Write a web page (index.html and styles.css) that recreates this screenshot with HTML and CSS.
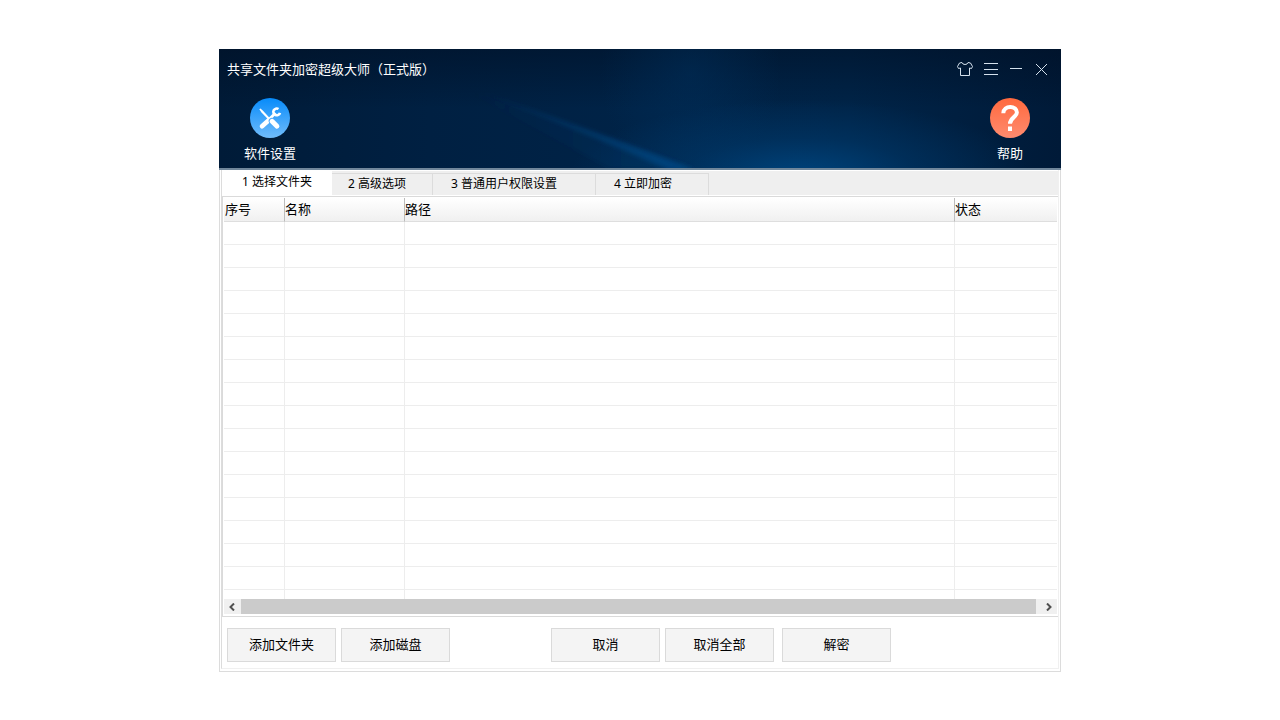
FILE: index.html
```html
<!DOCTYPE html>
<html lang="zh-CN">
<head>
<meta charset="utf-8">
<title>共享文件夹加密超级大师（正式版）</title>
<link rel="stylesheet" href="styles.css">
</head>
<body>
<main class="window">
  <header class="banner">
    <svg class="beams" viewBox="0 0 842 119" preserveAspectRatio="none" aria-hidden="true">
      <defs>
        <linearGradient id="beam" x1="0" y1="0" x2="1" y2="0"><stop offset="0" stop-color="#0a4f8c" stop-opacity="0.15"/><stop offset="1" stop-color="#0a5499" stop-opacity=".5"/></linearGradient>
        <linearGradient id="haze" x1="0" y1="0" x2="1" y2="0"><stop offset="0" stop-color="#003564" stop-opacity="0"/><stop offset="1" stop-color="#00407a" stop-opacity=".3"/></linearGradient>
        <filter id="soft" x="-10%" y="-30%" width="120%" height="160%"><feGaussianBlur stdDeviation="2"/></filter>
      </defs>
      <path d="M240 38L475 119H390Z" fill="url(#haze)" filter="url(#soft)"/>
      <path d="M260 43Q370 78 476 121H450Q350 77 260 43Z" fill="url(#beam)" filter="url(#soft)"/>
    </svg>
    <div class="titlebar">
      <h1 class="title">共享文件夹加密超级大师（正式版）</h1>
      <div class="controls">
        <button class="control" aria-label="皮肤"><svg width="18" height="18" viewBox="0 0 18 18"><path d="M6 2.500Q6.500 4.500 9 4.500Q11.500 4.500 12 2.500L14.500 3L16.500 6.500L15.500 8.500L13.500 8V15.500H4.500V8L2.500 8.500L1.500 6.500L3.500 3Z"/></svg></button>
        <button class="control" aria-label="菜单"><svg width="18" height="18" viewBox="0 0 18 18"><path d="M2 3.500H16M2 9.500H16M2 14.500H16"/></svg></button>
        <button class="control" aria-label="最小化"><svg width="18" height="18" viewBox="0 0 18 18"><path d="M2 8.500H14"/></svg></button>
        <button class="control" aria-label="关闭"><svg width="18" height="18" viewBox="0 0 18 18"><path d="M2 4L13 15M13 4L2 15"/></svg></button>
      </div>
    </div>
    <div class="toolbar">
      <button class="tool">
        <svg width="40" height="40" viewBox="0 0 40 40">
          <defs><linearGradient id="blue" x1="0" y1="0" x2="0" y2="1"><stop offset="0" stop-color="#078bfa"/><stop offset="1" stop-color="#70bcfb"/></linearGradient></defs>
          <circle cx="20" cy="20" r="20" fill="url(#blue)"/>
          <path d="M12 28.300L19 22" stroke="#fff" stroke-width="4.600" stroke-linecap="round"/>
          <path d="M18 22.500L25.500 15" stroke="#fff" stroke-width="2.800"/>
          <path d="M28.500 11A3.400 3.400 0 1 0 30 14.800" fill="none" stroke="#fff" stroke-width="2.600"/>
          <path d="M9.300 11.200L10.500 10.500L13 12.800L21.500 22L20 23.300L11.500 14.500Z" fill="#fff"/>
          <path d="M21.800 23L27 28.300" stroke="#4faafb" stroke-width="6.200" stroke-linecap="round"/>
          <path d="M22 23.200L27 28.300" stroke="#fff" stroke-width="4.800" stroke-linecap="round"/>
        </svg>
        <span>软件设置</span>
      </button>
      <button class="tool">
        <svg width="40" height="40" viewBox="0 0 40 40">
          <defs><linearGradient id="orange" x1="0" y1="0" x2="0" y2="1"><stop offset="0" stop-color="#ff693e"/><stop offset="1" stop-color="#ff8b6f"/></linearGradient></defs>
          <circle cx="20" cy="20" r="20" fill="url(#orange)"/>
          <path d="M13.300 15.200C13.500 7 26.900 7 26.900 14.500C26.900 19 20 19.500 20 25.800" fill="none" stroke="#fff" stroke-width="4"/>
          <rect x="18" y="28.500" width="4" height="4.500" fill="#fff"/>
        </svg>
        <span>帮助</span>
      </button>
    </div>
  </header>

  <div class="body">
    <div class="panel">
      <nav class="tabs" role="tablist">
        <button class="tab active" role="tab" aria-selected="true">1 选择文件夹</button>
        <button class="tab advanced" role="tab">2 高级选项</button>
        <button class="tab permission" role="tab">3 普通用户权限设置</button>
        <button class="tab encrypt" role="tab">4 立即加密</button>
      </nav>

      <section class="list">
        <table class="grid">
          <colgroup><col class="col-index"><col class="col-name"><col class="col-path"><col class="col-status"></colgroup>
          <thead><tr><th>序号</th><th>名称</th><th>路径</th><th>状态</th></tr></thead>
          <tbody>
            <tr><td></td><td></td><td></td><td></td></tr>
            <tr><td></td><td></td><td></td><td></td></tr>
            <tr><td></td><td></td><td></td><td></td></tr>
            <tr><td></td><td></td><td></td><td></td></tr>
            <tr><td></td><td></td><td></td><td></td></tr>
            <tr><td></td><td></td><td></td><td></td></tr>
            <tr><td></td><td></td><td></td><td></td></tr>
            <tr><td></td><td></td><td></td><td></td></tr>
            <tr><td></td><td></td><td></td><td></td></tr>
            <tr><td></td><td></td><td></td><td></td></tr>
            <tr><td></td><td></td><td></td><td></td></tr>
            <tr><td></td><td></td><td></td><td></td></tr>
            <tr><td></td><td></td><td></td><td></td></tr>
            <tr><td></td><td></td><td></td><td></td></tr>
            <tr><td></td><td></td><td></td><td></td></tr>
            <tr><td></td><td></td><td></td><td></td></tr>
            <tr class="partial"><td></td><td></td><td></td><td></td></tr>
          </tbody>
        </table>
        <div class="scrollbar">
          <button class="arrow" aria-label="向左滚动"><svg width="8" height="8" viewBox="0 0 8 8"><path d="M5 0.500L1.500 4L5 7.500"/></svg></button>
          <div class="thumb"></div>
          <button class="arrow right" aria-label="向右滚动"><svg width="8" height="8" viewBox="0 0 8 8"><path d="M2 0.500L5.500 4L2 7.500"/></svg></button>
        </div>
      </section>

      <footer class="actions">
        <div class="group"><button class="action">添加文件夹</button><button class="action">添加磁盘</button></div>
        <div class="group"><button class="action">取消</button><button class="action">取消全部</button></div>
        <button class="action">解密</button>
      </footer>
    </div>
  </div>
</main>
</body>
</html>
```
FILE: styles.css
```css
* { box-sizing: border-box; }

body {
  margin: 0;
  padding: 49px 219px;
  background: #fff;
  color: #000;
  font: 13px/20px "Noto Sans CJK SC", sans-serif;
}

button {
  margin: 0;
  padding: 0;
  border: 0;
  background: none;
  color: inherit;
  font: inherit;
}

svg { display: block; }

.window { background: #fff; }

.banner {
  position: relative;
  padding-bottom: 5px;
  border-bottom: 2px solid #71879b;
  background:
    radial-gradient(ellipse 230px 75px at 69% 106%, rgba(0, 80, 145, 0.7), rgba(0, 65, 120, 0.4) 50%, transparent),
    radial-gradient(ellipse 90px 110px at 56% 20%, rgba(0, 55, 105, 0.35), transparent),
    linear-gradient(180deg, rgba(0, 12, 30, 0.45), transparent 50%),
    linear-gradient(90deg, #001b38, #002042 25%, #002347 50%, #002448 75%, #001a38);
  color: #fff;
}

.beams {
  position: absolute;
  inset: 0;
  width: 100%;
  height: 100%;
}

.titlebar {
  position: relative;
  display: flex;
  justify-content: space-between;
  align-items: center;
  height: 40px;
  padding: 0 9px 0 8px;
}

.title {
  margin: 0;
  font-size: 13px;
  font-weight: 400;
}

.controls { display: flex; gap: 8px; }

.control path {
  fill: none;
  stroke: #d4e1ed;
  stroke-width: 1;
}

.toolbar {
  position: relative;
  display: flex;
  justify-content: space-between;
  padding: 9px 21px 0;
}

.tool {
  display: flex;
  flex-direction: column;
  align-items: center;
  gap: 5px;
  width: 60px;
}

.body {
  padding: 0 1px 2px;
  border: solid #dcdcdc;
  border-width: 0 1px 1px;
}

.panel {
  padding: 1px 0 6px;
  border: solid #f0f0f0;
  border-width: 0 1px 1px;
  border-left-color: #dcdcdc;
}

.tabs {
  display: flex;
  align-items: flex-end;
  height: 24px;
  background: #efefef;
  font: 12px/18px "Noto Sans", "Noto Sans CJK SC", sans-serif;
}

.tab {
  height: 22px;
  padding-bottom: 2px;
  border-top: 1px solid #dcdcdc;
  border-right: 1px solid #dcdcdc;
  text-align: left;
}

.tab.active {
  width: 110px;
  height: 24px;
  border: 0;
  background: #fff;
  text-align: center;
}

.advanced { width: 101px; padding-left: 16px; }
.permission { width: 163px; padding-left: 18px; }
.encrypt { width: 113px; padding-left: 18px; }

.list {
  margin-top: 1px;
  padding: 1px 1px 2px;
  border: solid #dadada;
  border-width: 1px 0 1px 1px;
}

.grid {
  width: 100%;
  border-collapse: separate;
  border-spacing: 0;
  table-layout: fixed;
}

.col-index { width: 61px; }
.col-name { width: 120px; }
.col-path { width: 550px; }

.grid th {
  height: 24px;
  padding: 0 0 1px;
  border-right: 1px solid #bcbcbc;
  border-bottom: 1px solid #dedede;
  background: linear-gradient(#fff, #f0f0f0);
  font-weight: 400;
  text-align: left;
}

.grid th:first-child { padding-left: 1px; }

.grid td {
  height: 23px;
  padding: 0;
  border-right: 1px solid #ededed;
  border-bottom: 1px solid #ededed;
}

.grid th:last-child,
.grid td:last-child { border-right: 0; }

.grid .partial td { height: 9px; border-bottom: 0; }

.scrollbar {
  display: flex;
  height: 15px;
  background: #f0f0f0;
}

.arrow {
  display: flex;
  align-items: center;
  justify-content: center;
  width: 17px;
}

.arrow.right { width: 21px; padding-left: 4px; }

.arrow path {
  fill: none;
  stroke: #505050;
  stroke-width: 2;
}

.thumb { flex: 1; background: #cbcbcb; }

.actions {
  display: flex;
  padding: 11px 5px 0;
}

.group { display: flex; gap: 5px; }
.group:first-child { margin-right: 101px; }
.group + .group { margin-right: 8px; }

.action {
  width: 109px;
  height: 34px;
  padding-bottom: 3px;
  border: 1px solid #dadada;
  background: #f4f4f4;
}
```
